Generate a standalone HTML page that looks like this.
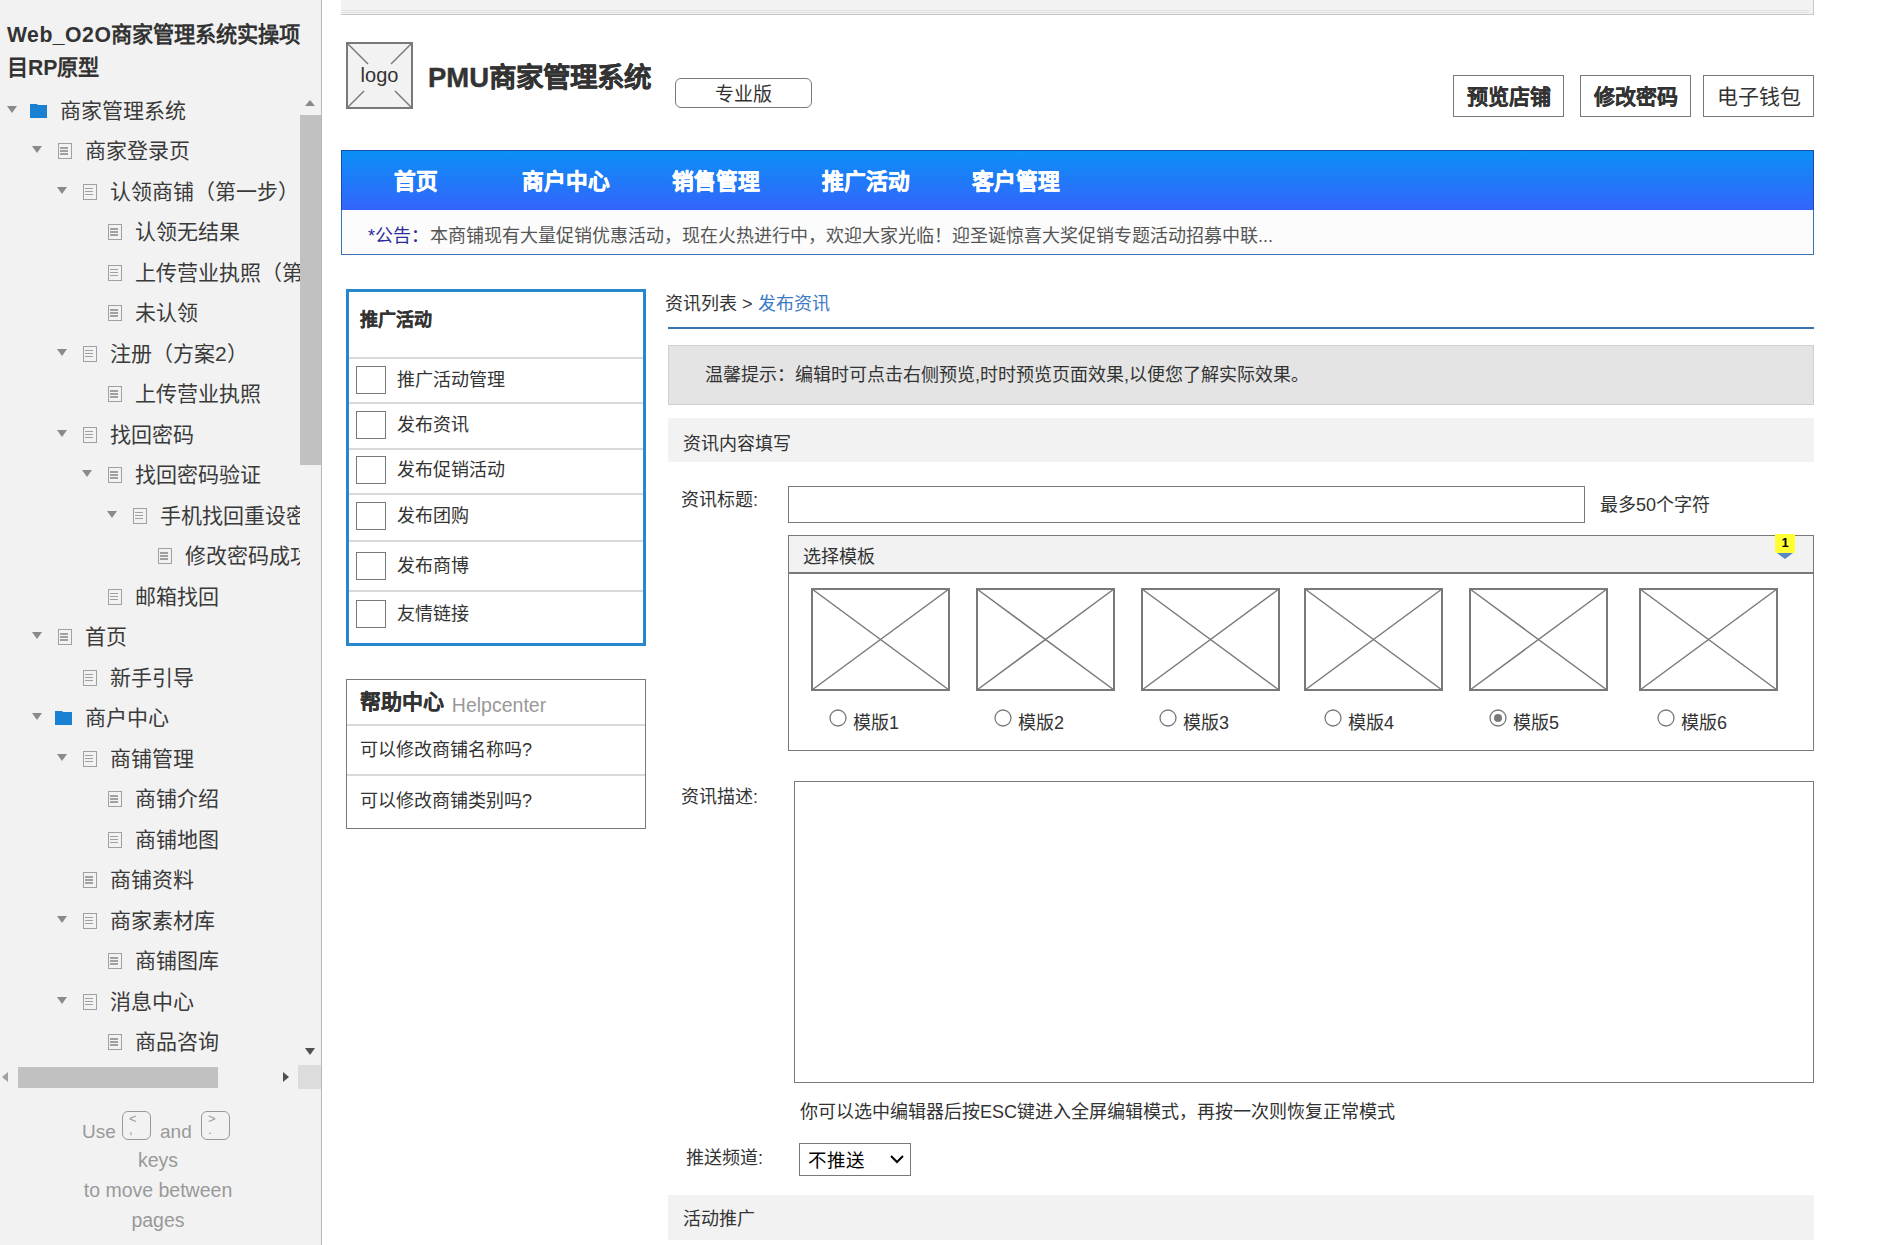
<!DOCTYPE html><html lang="zh-CN"><head><meta charset="utf-8"><style>
*{box-sizing:border-box;margin:0;padding:0}
html,body{width:1893px;height:1245px;overflow:hidden;background:#fff;font-family:"Liberation Sans",sans-serif;color:#333}
.a{position:absolute;white-space:nowrap}
#side{position:absolute;left:0;top:0;width:322px;height:1245px;background:#f2f2f2;overflow:hidden}
#sideb{position:absolute;left:321px;top:0;width:1px;height:1245px;background:#b8b8b8}
.title{position:absolute;left:7px;top:18px;width:310px;font-size:21.2px;font-weight:bold;line-height:33px;color:#333;white-space:normal}
#tree{position:absolute;left:0;top:0;width:300px;height:1062px;overflow:hidden}
.tri{position:absolute;width:0;height:0;border-left:5px solid transparent;border-right:5px solid transparent;border-top:7px solid #8a8a8a}
.doc{position:absolute;width:14px;height:16px;border:1.6px solid #a0a0a0}
.doc i{position:absolute;left:1px;width:8px;height:1.5px;background:#a0a0a0}
.fold{position:absolute;width:17px;height:14px;background:#1e88d8}
.tt{position:absolute;font-size:21px;line-height:24px;color:#3a3a3a;white-space:nowrap}
.bx{position:absolute;border:1px solid #797979}
</style></head><body>
<div id="side"><div class="title"><span style="letter-spacing:0.5px">Web_O2O</span>商家管理系统实操项<br>目RP原型</div><div id="tree">
<div class="tri" style="left:7px;top:105.5px"></div>
<svg class="a" style="left:30px;top:103.5px" width="17" height="14"><path d="M0 0H7L8 1H17V14H0Z" fill="#1a80d2"/></svg>
<div class="tt" style="left:60px;top:98.5px">商家管理系统</div>
<div class="tri" style="left:32px;top:146.0px"></div>
<div class="doc" style="left:58px;top:143.0px"><i style="top:3px"></i><i style="top:6px"></i><i style="top:9px"></i></div>
<div class="tt" style="left:85px;top:139.0px">商家登录页</div>
<div class="tri" style="left:57px;top:186.5px"></div>
<div class="doc" style="left:83px;top:183.5px"><i style="top:3px"></i><i style="top:6px"></i><i style="top:9px"></i></div>
<div class="tt" style="left:110px;top:179.5px">认领商铺（第一步）</div>
<div class="doc" style="left:108px;top:224.0px"><i style="top:3px"></i><i style="top:6px"></i><i style="top:9px"></i></div>
<div class="tt" style="left:135px;top:220.0px">认领无结果</div>
<div class="doc" style="left:108px;top:264.5px"><i style="top:3px"></i><i style="top:6px"></i><i style="top:9px"></i></div>
<div class="tt" style="left:135px;top:260.5px">上传营业执照（第二步）</div>
<div class="doc" style="left:108px;top:305.0px"><i style="top:3px"></i><i style="top:6px"></i><i style="top:9px"></i></div>
<div class="tt" style="left:135px;top:301.0px">未认领</div>
<div class="tri" style="left:57px;top:348.5px"></div>
<div class="doc" style="left:83px;top:345.5px"><i style="top:3px"></i><i style="top:6px"></i><i style="top:9px"></i></div>
<div class="tt" style="left:110px;top:341.5px">注册（方案2）</div>
<div class="doc" style="left:108px;top:386.0px"><i style="top:3px"></i><i style="top:6px"></i><i style="top:9px"></i></div>
<div class="tt" style="left:135px;top:382.0px">上传营业执照</div>
<div class="tri" style="left:57px;top:429.5px"></div>
<div class="doc" style="left:83px;top:426.5px"><i style="top:3px"></i><i style="top:6px"></i><i style="top:9px"></i></div>
<div class="tt" style="left:110px;top:422.5px">找回密码</div>
<div class="tri" style="left:82px;top:470.0px"></div>
<div class="doc" style="left:108px;top:467.0px"><i style="top:3px"></i><i style="top:6px"></i><i style="top:9px"></i></div>
<div class="tt" style="left:135px;top:463.0px">找回密码验证</div>
<div class="tri" style="left:107px;top:510.5px"></div>
<div class="doc" style="left:133px;top:507.5px"><i style="top:3px"></i><i style="top:6px"></i><i style="top:9px"></i></div>
<div class="tt" style="left:160px;top:503.5px">手机找回重设密码</div>
<div class="doc" style="left:158px;top:548.0px"><i style="top:3px"></i><i style="top:6px"></i><i style="top:9px"></i></div>
<div class="tt" style="left:185px;top:544.0px">修改密码成功</div>
<div class="doc" style="left:108px;top:588.5px"><i style="top:3px"></i><i style="top:6px"></i><i style="top:9px"></i></div>
<div class="tt" style="left:135px;top:584.5px">邮箱找回</div>
<div class="tri" style="left:32px;top:632.0px"></div>
<div class="doc" style="left:58px;top:629.0px"><i style="top:3px"></i><i style="top:6px"></i><i style="top:9px"></i></div>
<div class="tt" style="left:85px;top:625.0px">首页</div>
<div class="doc" style="left:83px;top:669.5px"><i style="top:3px"></i><i style="top:6px"></i><i style="top:9px"></i></div>
<div class="tt" style="left:110px;top:665.5px">新手引导</div>
<div class="tri" style="left:32px;top:713.0px"></div>
<svg class="a" style="left:55px;top:711.0px" width="17" height="14"><path d="M0 0H7L8 1H17V14H0Z" fill="#1a80d2"/></svg>
<div class="tt" style="left:85px;top:706.0px">商户中心</div>
<div class="tri" style="left:57px;top:753.5px"></div>
<div class="doc" style="left:83px;top:750.5px"><i style="top:3px"></i><i style="top:6px"></i><i style="top:9px"></i></div>
<div class="tt" style="left:110px;top:746.5px">商铺管理</div>
<div class="doc" style="left:108px;top:791.0px"><i style="top:3px"></i><i style="top:6px"></i><i style="top:9px"></i></div>
<div class="tt" style="left:135px;top:787.0px">商铺介绍</div>
<div class="doc" style="left:108px;top:831.5px"><i style="top:3px"></i><i style="top:6px"></i><i style="top:9px"></i></div>
<div class="tt" style="left:135px;top:827.5px">商铺地图</div>
<div class="doc" style="left:83px;top:872.0px"><i style="top:3px"></i><i style="top:6px"></i><i style="top:9px"></i></div>
<div class="tt" style="left:110px;top:868.0px">商铺资料</div>
<div class="tri" style="left:57px;top:915.5px"></div>
<div class="doc" style="left:83px;top:912.5px"><i style="top:3px"></i><i style="top:6px"></i><i style="top:9px"></i></div>
<div class="tt" style="left:110px;top:908.5px">商家素材库</div>
<div class="doc" style="left:108px;top:953.0px"><i style="top:3px"></i><i style="top:6px"></i><i style="top:9px"></i></div>
<div class="tt" style="left:135px;top:949.0px">商铺图库</div>
<div class="tri" style="left:57px;top:996.5px"></div>
<div class="doc" style="left:83px;top:993.5px"><i style="top:3px"></i><i style="top:6px"></i><i style="top:9px"></i></div>
<div class="tt" style="left:110px;top:989.5px">消息中心</div>
<div class="doc" style="left:108px;top:1034.0px"><i style="top:3px"></i><i style="top:6px"></i><i style="top:9px"></i></div>
<div class="tt" style="left:135px;top:1030.0px">商品咨询</div>
</div>
<div class="a" style="left:305px;top:100px;width:0;height:0;border-left:5.5px solid transparent;border-right:5.5px solid transparent;border-bottom:6px solid #8a8a8a"></div>
<div class="a" style="left:300px;top:115px;width:21px;height:350px;background:#c1c1c1"></div>
<div class="a" style="left:305px;top:1048px;width:0;height:0;border-left:5.5px solid transparent;border-right:5.5px solid transparent;border-top:7px solid #505050"></div>
<div class="a" style="left:2px;top:1072px;width:0;height:0;border-top:5px solid transparent;border-bottom:5px solid transparent;border-right:6px solid #a0a0a0"></div>
<div class="a" style="left:18px;top:1067px;width:200px;height:21px;background:#c1c1c1"></div>
<div class="a" style="left:283px;top:1072px;width:0;height:0;border-top:5px solid transparent;border-bottom:5px solid transparent;border-left:6px solid #505050"></div>
<div class="a" style="left:298px;top:1065px;width:23px;height:24px;background:#dcdcdc"></div>
<div class="a" style="left:82px;top:1121px;font-size:19px;color:#999">Use</div>
<div class="a" style="left:122px;top:1111px;width:29px;height:29px;border:1px solid #999;border-radius:6px"></div>
<div class="a" style="left:129px;top:1113px;font-size:13px;color:#999;line-height:11px">&lt;<br>,</div>
<div class="a" style="left:160px;top:1121px;font-size:19px;color:#999">and</div>
<div class="a" style="left:201px;top:1111px;width:29px;height:29px;border:1px solid #999;border-radius:6px"></div>
<div class="a" style="left:208px;top:1113px;font-size:13px;color:#999;line-height:11px">&gt;<br>.</div>
<div class="a" style="left:0;width:316px;text-align:center;top:1145px;font-size:19.5px;line-height:30px;color:#999">keys<br>to move between<br>pages</div>
<div id="sideb"></div></div>
<div class="a" style="left:341px;top:0;width:1473px;height:15px;background:#f2f2f2;border-bottom:1px solid #c9c9c9;border-right:1px solid #c9c9c9"></div>
<div class="a" style="left:341px;top:10px;width:1468px;height:1px;background:#e2e2e2"></div>
<div class="a" style="left:341px;top:12px;width:1468px;height:1px;background:#e2e2e2"></div>
<div class="a" style="left:346px;top:42px;width:67px;height:67px;background:#f2f2f2;border:2px solid #797979"></div>
<svg class="a" style="left:346px;top:42px" width="67" height="67"><line x1="2" y1="2" x2="22" y2="22" stroke="#797979" stroke-width="1.5"/><line x1="65" y1="2" x2="45" y2="22" stroke="#797979" stroke-width="1.5"/><line x1="2" y1="65" x2="18" y2="49" stroke="#797979" stroke-width="1.5"/><line x1="65" y1="65" x2="49" y2="49" stroke="#797979" stroke-width="1.5"/></svg>
<div class="a" style="left:346px;top:64px;width:67px;text-align:center;font-size:20px;color:#333">logo</div>
<div class="a" style="left:428px;top:55px;font-size:27.5px;font-weight:bold;color:#333;-webkit-text-stroke:0.4px #333">PMU商家管理系统</div>
<div class="a" style="left:675px;top:78px;width:137px;height:30px;border:1px solid #797979;border-radius:6px;text-align:center;font-size:19px;line-height:31px;color:#333">专业版</div>
<div class="a" style="left:1453px;top:75px;width:111px;height:42px;border:1px solid #797979;text-align:center;font-size:21px;line-height:41.5px;font-weight:bold;color:#333;-webkit-text-stroke:0.2px #333">预览店铺</div>
<div class="a" style="left:1580px;top:75px;width:111px;height:42px;border:1px solid #797979;text-align:center;font-size:21px;line-height:41.5px;font-weight:bold;color:#333;-webkit-text-stroke:0.2px #333">修改密码</div>
<div class="a" style="left:1703px;top:75px;width:111px;height:42px;border:1px solid #797979;text-align:center;font-size:21px;line-height:41.5px;font-weight:normal;color:#333;">电子钱包</div>
<div class="a" style="left:341px;top:150px;width:1473px;height:61px;background:linear-gradient(#0b90f6,#3464fb);border:1px solid #1c4aa8"></div>
<div class="a" style="left:394px;top:163.5px;font-size:21.7px;font-weight:bold;color:#fff;-webkit-text-stroke:0.5px #fff">首页</div>
<div class="a" style="left:522px;top:163.5px;font-size:21.7px;font-weight:bold;color:#fff;-webkit-text-stroke:0.5px #fff">商户中心</div>
<div class="a" style="left:672px;top:163.5px;font-size:21.7px;font-weight:bold;color:#fff;-webkit-text-stroke:0.5px #fff">销售管理</div>
<div class="a" style="left:822px;top:163.5px;font-size:21.7px;font-weight:bold;color:#fff;-webkit-text-stroke:0.5px #fff">推广活动</div>
<div class="a" style="left:972px;top:163.5px;font-size:21.7px;font-weight:bold;color:#fff;-webkit-text-stroke:0.5px #fff">客户管理</div>
<div class="a" style="left:341px;top:210px;width:1473px;height:45px;background:#fcfcfc;border:1px solid #3a74b4;border-top:none"></div>
<div class="a" style="left:368px;top:221px;font-size:18px;color:#2b2b9b">*公告：</div>
<div class="a" style="left:430px;top:221px;font-size:18px;color:#555">本商铺现有大量促销优惠活动，现在火热进行中，欢迎大家光临！迎圣诞惊喜大奖促销专题活动招募中联...</div>
<div class="a" style="left:346px;top:289px;width:300px;height:357px;border:3px solid #2687cb;background:#fff"></div>
<div class="a" style="left:360px;top:305px;font-size:18px;font-weight:bold;color:#333;-webkit-text-stroke:0.2px #333">推广活动</div>
<div class="a" style="left:349px;top:356.6px;width:294px;height:2px;background:#d9d9d9"></div>
<div class="a" style="left:349px;top:401.7px;width:294px;height:2px;background:#d9d9d9"></div>
<div class="a" style="left:349px;top:447.5px;width:294px;height:2px;background:#d9d9d9"></div>
<div class="a" style="left:349px;top:492.7px;width:294px;height:2px;background:#d9d9d9"></div>
<div class="a" style="left:349px;top:540.0px;width:294px;height:2px;background:#d9d9d9"></div>
<div class="a" style="left:349px;top:590.3px;width:294px;height:2px;background:#d9d9d9"></div>
<div class="a" style="left:356px;top:366px;width:30px;height:28px;border:1px solid #797979;background:#fff"></div>
<div class="a" style="left:397px;top:364.5px;font-size:18px;color:#333">推广活动管理</div>
<div class="a" style="left:356px;top:411px;width:30px;height:28px;border:1px solid #797979;background:#fff"></div>
<div class="a" style="left:397px;top:409.5px;font-size:18px;color:#333">发布资讯</div>
<div class="a" style="left:356px;top:456px;width:30px;height:28px;border:1px solid #797979;background:#fff"></div>
<div class="a" style="left:397px;top:454.5px;font-size:18px;color:#333">发布促销活动</div>
<div class="a" style="left:356px;top:502px;width:30px;height:28px;border:1px solid #797979;background:#fff"></div>
<div class="a" style="left:397px;top:500.5px;font-size:18px;color:#333">发布团购</div>
<div class="a" style="left:356px;top:552px;width:30px;height:28px;border:1px solid #797979;background:#fff"></div>
<div class="a" style="left:397px;top:550.5px;font-size:18px;color:#333">发布商博</div>
<div class="a" style="left:356px;top:600px;width:30px;height:28px;border:1px solid #797979;background:#fff"></div>
<div class="a" style="left:397px;top:598.5px;font-size:18px;color:#333">友情链接</div>
<div class="a" style="left:346px;top:679px;width:300px;height:150px;border:1px solid #797979"></div>
<div class="a" style="left:347px;top:724px;width:298px;height:2px;background:#d9d9d9"></div>
<div class="a" style="left:347px;top:774px;width:298px;height:2px;background:#d9d9d9"></div>
<div class="a" style="left:360px;top:685px;font-size:21px;font-weight:bold;color:#333"><span style="-webkit-text-stroke:0.2px #333">帮助中心</span> <span style="font-weight:normal;font-size:19.5px;color:#999;margin-left:2px;position:relative;top:3px">Helpcenter</span></div>
<div class="a" style="left:360px;top:734.5px;font-size:18px;color:#333">可以修改商铺名称吗?</div>
<div class="a" style="left:360px;top:785.5px;font-size:18px;color:#333">可以修改商铺类别吗?</div>
<div class="a" style="left:665px;top:289px;font-size:18px;color:#333">资讯列表 &gt; <span style="color:#3d7ac6">发布资讯</span></div>
<div class="a" style="left:668px;top:326.5px;width:1146px;height:2px;background:#3a74b0"></div>
<div class="a" style="left:668px;top:345px;width:1146px;height:60px;background:#e4e4e4;border:1px solid #cfcfcf"></div>
<div class="a" style="left:705px;top:360px;font-size:18px;color:#333">温馨提示：编辑时可点击右侧预览,时时预览页面效果,以便您了解实际效果。</div>
<div class="a" style="left:668px;top:418px;width:1146px;height:44px;background:#f2f2f2"></div>
<div class="a" style="left:683px;top:428.5px;font-size:18px;color:#333">资讯内容填写</div>
<div class="a" style="left:681px;top:485px;font-size:18px;color:#333">资讯标题:</div>
<div class="a" style="left:788px;top:486px;width:797px;height:37px;border:1px solid #797979"></div>
<div class="a" style="left:1600px;top:490px;font-size:18px;color:#333">最多50个字符</div>
<div class="a" style="left:788px;top:535px;width:1026px;height:216px;border:1px solid #797979"></div>
<div class="a" style="left:789px;top:536px;width:1024px;height:38px;background:#f2f2f2;border-bottom:2px solid #797979"></div>
<div class="a" style="left:803px;top:542px;font-size:18px;color:#333">选择模板</div>
<svg class="a" style="left:811px;top:588px" width="139" height="103"><rect x="1" y="1" width="137" height="101" fill="#fff" stroke="#797979" stroke-width="2"/><line x1="1" y1="1" x2="138" y2="102" stroke="#797979" stroke-width="1.5"/><line x1="138" y1="1" x2="1" y2="102" stroke="#797979" stroke-width="1.5"/></svg>
<svg class="a" style="left:829px;top:709px" width="18" height="18"><circle cx="9" cy="9" r="8" fill="#fff" stroke="#797979" stroke-width="1.3"/></svg>
<div class="a" style="left:853px;top:707.5px;font-size:18px;color:#333">模版1</div>
<svg class="a" style="left:976px;top:588px" width="139" height="103"><rect x="1" y="1" width="137" height="101" fill="#fff" stroke="#797979" stroke-width="2"/><line x1="1" y1="1" x2="138" y2="102" stroke="#797979" stroke-width="1.5"/><line x1="138" y1="1" x2="1" y2="102" stroke="#797979" stroke-width="1.5"/></svg>
<svg class="a" style="left:994px;top:709px" width="18" height="18"><circle cx="9" cy="9" r="8" fill="#fff" stroke="#797979" stroke-width="1.3"/></svg>
<div class="a" style="left:1018px;top:707.5px;font-size:18px;color:#333">模版2</div>
<svg class="a" style="left:1141px;top:588px" width="139" height="103"><rect x="1" y="1" width="137" height="101" fill="#fff" stroke="#797979" stroke-width="2"/><line x1="1" y1="1" x2="138" y2="102" stroke="#797979" stroke-width="1.5"/><line x1="138" y1="1" x2="1" y2="102" stroke="#797979" stroke-width="1.5"/></svg>
<svg class="a" style="left:1159px;top:709px" width="18" height="18"><circle cx="9" cy="9" r="8" fill="#fff" stroke="#797979" stroke-width="1.3"/></svg>
<div class="a" style="left:1183px;top:707.5px;font-size:18px;color:#333">模版3</div>
<svg class="a" style="left:1304px;top:588px" width="139" height="103"><rect x="1" y="1" width="137" height="101" fill="#fff" stroke="#797979" stroke-width="2"/><line x1="1" y1="1" x2="138" y2="102" stroke="#797979" stroke-width="1.5"/><line x1="138" y1="1" x2="1" y2="102" stroke="#797979" stroke-width="1.5"/></svg>
<svg class="a" style="left:1324px;top:709px" width="18" height="18"><circle cx="9" cy="9" r="8" fill="#fff" stroke="#797979" stroke-width="1.3"/></svg>
<div class="a" style="left:1348px;top:707.5px;font-size:18px;color:#333">模版4</div>
<svg class="a" style="left:1469px;top:588px" width="139" height="103"><rect x="1" y="1" width="137" height="101" fill="#fff" stroke="#797979" stroke-width="2"/><line x1="1" y1="1" x2="138" y2="102" stroke="#797979" stroke-width="1.5"/><line x1="138" y1="1" x2="1" y2="102" stroke="#797979" stroke-width="1.5"/></svg>
<svg class="a" style="left:1489px;top:709px" width="18" height="18"><circle cx="9" cy="9" r="8" fill="#fff" stroke="#797979" stroke-width="1.3"/><circle cx="9" cy="9" r="4" fill="#797979"/></svg>
<div class="a" style="left:1513px;top:707.5px;font-size:18px;color:#333">模版5</div>
<svg class="a" style="left:1639px;top:588px" width="139" height="103"><rect x="1" y="1" width="137" height="101" fill="#fff" stroke="#797979" stroke-width="2"/><line x1="1" y1="1" x2="138" y2="102" stroke="#797979" stroke-width="1.5"/><line x1="138" y1="1" x2="1" y2="102" stroke="#797979" stroke-width="1.5"/></svg>
<svg class="a" style="left:1657px;top:709px" width="18" height="18"><circle cx="9" cy="9" r="8" fill="#fff" stroke="#797979" stroke-width="1.3"/></svg>
<div class="a" style="left:1681px;top:707.5px;font-size:18px;color:#333">模版6</div>
<div class="a" style="left:1775px;top:533.5px;width:20px;height:19px;background:#ffff33;border-radius:1px;font-size:13px;font-weight:bold;text-align:center;line-height:18px;color:#000">1</div>
<div class="a" style="left:1776.5px;top:552.5px;width:0;height:0;border-left:8.5px solid transparent;border-right:8.5px solid transparent;border-top:6.5px solid #5b86c8"></div>
<div class="a" style="left:681px;top:782px;font-size:18px;color:#333">资讯描述:</div>
<div class="a" style="left:794px;top:781px;width:1020px;height:302px;border:1px solid #797979"></div>
<div class="a" style="left:800px;top:1097px;font-size:18px;color:#333">你可以选中编辑器后按ESC键进入全屏编辑模式，再按一次则恢复正常模式</div>
<div class="a" style="left:686px;top:1143px;font-size:18px;color:#333">推送频道:</div>
<div class="a" style="left:799px;top:1143px;width:112px;height:33px;border:1px solid #797979;background:#fff"></div>
<div class="a" style="left:808px;top:1146px;font-size:18.5px;color:#000">不推送</div>
<svg class="a" style="left:889px;top:1153px" width="16" height="12"><polyline points="2,3 8,9 14,3" fill="none" stroke="#000" stroke-width="2"/></svg>
<div class="a" style="left:668px;top:1195px;width:1146px;height:45px;background:#f2f2f2"></div>
<div class="a" style="left:683px;top:1204px;font-size:18px;color:#333">活动推广</div>
</body></html>
